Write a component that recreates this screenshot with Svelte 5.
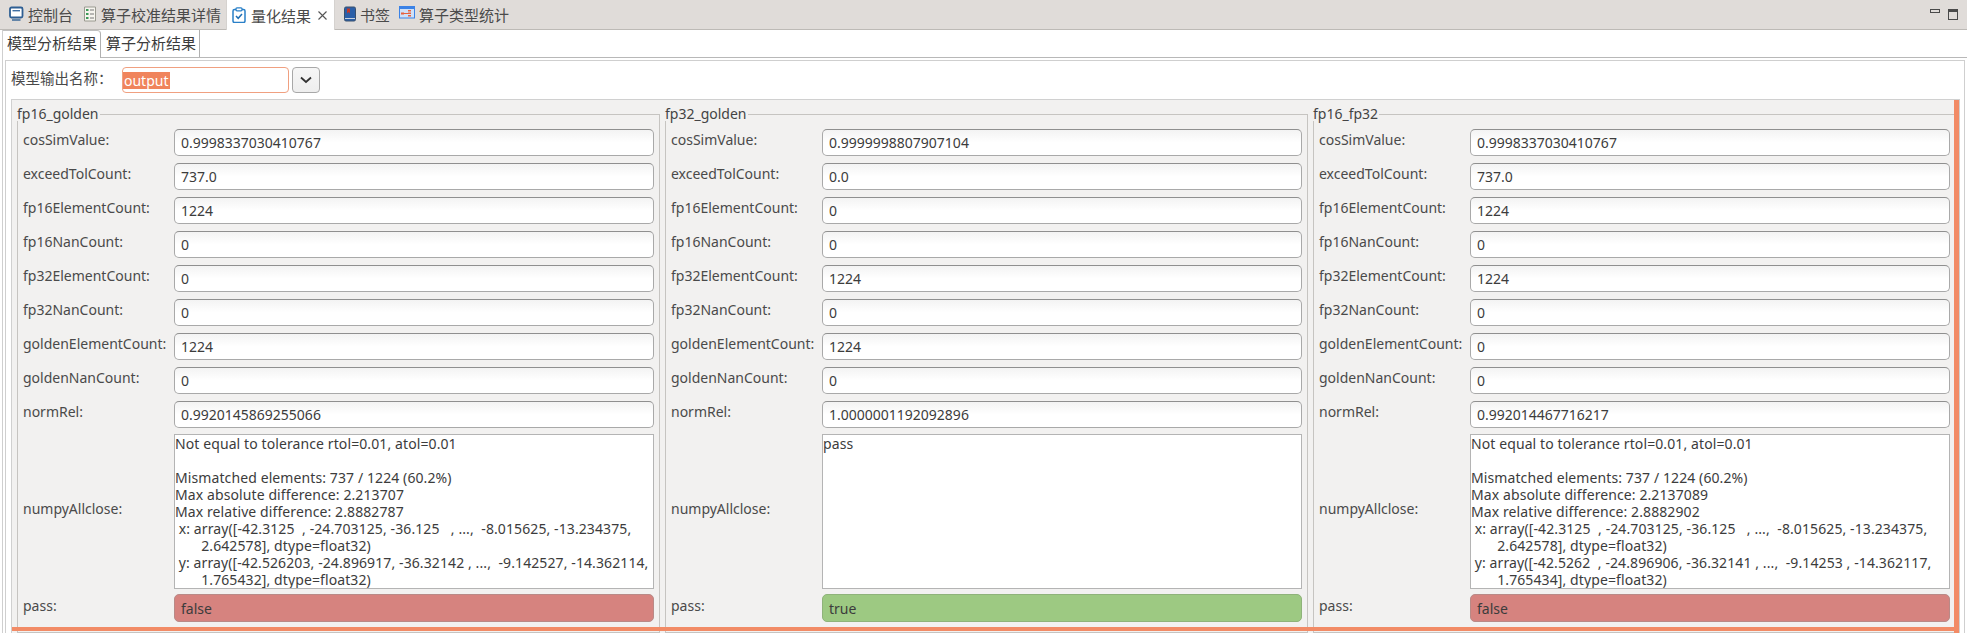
<script>
  const tabs = [
    { id: 'console', label: '控制台' },
    { id: 'list', label: '算子校准结果详情' },
    { id: 'clip', label: '量化结果', active: true },
    { id: 'book', label: '书签' },
    { id: 'panel', label: '算子类型统计' }
  ];
  const keys = ['cosSimValue','exceedTolCount','fp16ElementCount','fp16NanCount','fp32ElementCount','fp32NanCount','goldenElementCount','goldenNanCount','normRel'];
  const groups = [
    { title: 'fp16_golden', values: ['0.9998337030410767','737.0','1224','0','0','0','1224','0','0.9920145869255066'],
      text: `Not equal to tolerance rtol=0.01, atol=0.01

Mismatched elements: 737 / 1224 (60.2%)
Max absolute difference: 2.213707
Max relative difference: 2.8882787
 x: array([-42.3125  , -24.703125, -36.125   , ...,  -8.015625, -13.234375,
       2.642578], dtype=float32)
 y: array([-42.526203, -24.896917, -36.32142 , ...,  -9.142527, -14.362114,
       1.765432], dtype=float32)`, pass: false },
    { title: 'fp32_golden', values: ['0.9999998807907104','0.0','0','0','1224','0','1224','0','1.0000001192092896'],
      text: 'pass', pass: true },
    { title: 'fp16_fp32', values: ['0.9998337030410767','737.0','1224','0','1224','0','0','0','0.992014467716217'],
      text: `Not equal to tolerance rtol=0.01, atol=0.01

Mismatched elements: 737 / 1224 (60.2%)
Max absolute difference: 2.2137089
Max relative difference: 2.8882902
 x: array([-42.3125  , -24.703125, -36.125   , ...,  -8.015625, -13.234375,
       2.642578], dtype=float32)
 y: array([-42.5262  , -24.896906, -36.32141 , ...,  -9.14253 , -14.362117,
       1.765434], dtype=float32)`, pass: false }
  ];
</script>

<div class="app">
  <div class="tabbar">
    {#each tabs as t}
      <div class="tab t-{t.id}" class:active={t.active}>
        <svg class="ico" viewBox="0 0 16 16" width="16" height="16">
          {#if t.id === 'console'}
            <rect x="2" y="1.500" width="12.500" height="10" rx="1.500" fill="#fff" stroke="#2f5f93" stroke-width="1.800"/>
            <rect x="4.500" y="4" width="7.500" height="1.400" fill="#3f6fa3"/>
            <path d="M4 13.300h8.500v1.400H4z" fill="#2f5f93"/>
          {:else if t.id === 'list'}
            <path d="M2.500 1h11v14h-11z" fill="#f6f4ee" stroke="#9a9a90"/>
            <path d="M4 3h2.500v2H4zM4 7h2.500v2H4zM4 11h2.500v2H4z" fill="#3f9a5a"/>
            <path d="M8 4h4M8 8h4M8 12h4" stroke="#777" stroke-width="1"/>
          {:else if t.id === 'clip'}
            <rect x="2" y="2.500" width="12" height="13" rx="1.500" fill="#fff" stroke="#2a80c8" stroke-width="1.500"/>
            <rect x="5" y="0.800" width="6" height="3" rx="1" fill="#fff" stroke="#2a80c8" stroke-width="1.300"/>
            <path d="M5 9l2.200 2.300L11 7" fill="none" stroke="#1f6fb5" stroke-width="1.500"/>
          {:else if t.id === 'book'}
            <rect x="2.500" y="1" width="11" height="14" rx="1.500" fill="#2a5fa8" stroke="#39506e"/>
            <path d="M3 12.500h10" stroke="#c9d3df" stroke-width="1"/>
            <path d="M5 2.500h3v5L6.500 6 5 7.500z" fill="#c0392b"/>
          {:else}
            <rect x="0" y="0" width="16" height="12.500" fill="#3b82e6"/>
            <rect x="1" y="3" width="14" height="8.500" fill="#cfe0f7"/>
            <path d="M2 6.500h3v2H2z" fill="#e8613c"/>
            <path d="M9 4h3v1.500H9zM9 6.500h3V8H9zM9 9h3v1.500H9z" fill="#e8613c"/>
            <path d="M5 7.500h4" stroke="#e8613c"/>
          {/if}
        </svg>
        <span>{t.label}</span>
        {#if t.active}
          <svg class="close" viewBox="0 0 9 9" width="9" height="9"><path d="M.5.500l8 8M8.500.500l-8 8" stroke="#555" stroke-width="1.100"/></svg>
        {/if}
      </div>
    {/each}
    <div class="winbtns">
      <span class="min"></span>
      <span class="max"></span>
    </div>
  </div>

  <div class="content">
    <div class="subtabs">
      <div class="subtab on">模型分析结果</div>
      <div class="subtab">算子分析结果</div>
    </div>

    <div class="panel">
      <div class="combo">
        <span class="clabel">模型输出名称：</span>
        <div class="cinput"><span class="sel">output</span></div>
        <div class="cbtn">
          <svg viewBox="0 0 12 8" width="12" height="8"><path d="M1 1.500l5 4.500 5-4.500" fill="none" stroke="#333" stroke-width="1.800"/></svg>
        </div>
      </div>

      <div class="composite">
        <div class="groups">
          {#each groups as g}
            <div class="group">
              <div class="gtitle"><span>{g.title}</span></div>
              <div class="gbody">
                {#each keys as k, i}
                  <div class="label">{k}:</div>
                  <div class="field">{g.values[i]}</div>
                {/each}
                <div class="label mid">numpyAllclose:</div>
                <div class="area">{g.text}</div>
                <div class="label plabel">pass:</div>
                <div class="field passf" class:ok={g.pass}>{g.pass ? 'true' : 'false'}</div>
              </div>
            </div>
          {/each}
        </div>
        <div class="hl-right"></div>
        <div class="hl-bottom"></div>
      </div>
    </div>
  </div>
</div>

<style>
  :global(body) { margin: 0; background: #fff; }
  .app {
    width: 1967px; height: 633px; overflow: hidden; background: #fff;
    display: flex; flex-direction: column;
    font-family: "Noto Sans", "Noto Sans CJK SC", sans-serif;
    font-size: 14px; color: #3c3c3c;
  }
  .tabbar {
    height: 29px; flex: none; background: #e0dcd9; border-bottom: 1px solid #bdbab6;
    display: flex; align-items: stretch; padding-left: 3px; font-size: 15px; color: #4a4a4a;
  }
  .tab { display: flex; align-items: center; white-space: nowrap; }
  .t-console { margin-left: 5px; gap: 4px; }
  .t-list { margin-left: 9px; gap: 3px; }
  .t-clip {
    margin-left: 5px; gap: 4px; padding-left: 4px; width: 109px; height: 30px; box-sizing: border-box;
    background: #fff; border-left: 1px solid #d5d2cf; border-right: 1px solid #d5d2cf;
  }
  .t-book { margin-left: 7px; gap: 2px; }
  .t-panel { margin-left: 9px; gap: 4px; }
  .ico { flex: none; margin-bottom: 1px; }
  .close { margin-left: 3px; flex: none; }
  .winbtns { margin-left: auto; display: flex; gap: 8px; align-items: flex-start; padding: 9px 8px 0 0; }
  .min { width: 8px; height: 2px; border: 1px solid #4a4a4a; }
  .max { width: 8px; height: 7px; border: 1px solid #4a4a4a; border-top-width: 3px; margin-right: 1px; }
  .content { flex: 1; min-height: 0; margin-left: 2px; border-left: 1px solid #cfcfcf; display: flex; flex-direction: column; }
  .subtabs {
    height: 27px; flex: none; border-bottom: 1px solid #b8b8b8; display: flex; font-size: 15px; background: #fff;
  }
  .subtab { padding: 0 2px 0 5px; line-height: 26px; width: 91px; border-right: 1px solid #b0b0b0; white-space: nowrap; }
  .subtab.on {
    border-top: 1px solid #c0c0c0; border-top-right-radius: 4px; height: 27px; background: #fff;
    padding: 0 2px 0 4px; line-height: 25px; position: relative;
  }
  .panel {
    flex: 1; margin: 2px 2px 0 2px; border: 1px solid #cfcfcf; border-bottom: 0;
    display: flex; flex-direction: column; padding: 6px 4px 0 5px; min-height: 0;
  }
  .combo { height: 26px; flex: none; display: flex; align-items: flex-start; }
  .clabel { width: 111px; font-size: 14.500px; line-height: 22px; color: #4a4a4a; white-space: nowrap; }
  .cinput {
    width: 165px; height: 24px; border: 1px solid #f0a080; border-radius: 4px; background: #fff;
    display: flex; align-items: center; overflow: hidden;
  }
  .sel { background: #f0845c; color: #fff; height: 17px; line-height: 17px; padding: 0 1px; width: 45px; font-size: 14px; }
  .cbtn {
    width: 26px; height: 24px; margin-left: 3px; border: 1px solid #a8a8a8; border-radius: 4px;
    background: linear-gradient(#f6f6f6, #eeeeee); display: flex; align-items: center; justify-content: center;
  }
  .composite {
    margin-top: 6px; flex: 1; min-height: 0; position: relative; background: #f2f1f0;
    border: 1px solid #d0d0d0; border-bottom: 0; padding: 6px 0 0 5px; overflow: hidden;
  }
  .groups { display: grid; grid-template-columns: repeat(3, 643px); column-gap: 5px; }
  .gtitle { height: 15px; display: flex; align-items: flex-start; line-height: 15px; }
  .gtitle span { padding-right: 1px; color: #444; }
  .gtitle::after {
    content: ""; flex: 1; height: 7px; margin-top: 8px;
    border-top: 1px solid #c6c4c1; border-right: 1px solid #c6c4c1;
  }
  .gbody {
    border-left: 1px solid #c6c4c1; border-right: 1px solid #c6c4c1; border-bottom: 1px solid #c6c4c1;
    padding: 8px 5px 10px 5px; display: grid; grid-template-columns: 151px 480px; row-gap: 7px;
  }
  .label { line-height: 20px; padding-top: 1px; color: #4a4a4a; white-space: nowrap; }
  .label.mid { align-self: center; padding: 0 0 5px; }
  .label.plabel { padding-top: 2px; }
  .field {
    height: 25px; line-height: 25px; padding: 0 6px; border: 1px solid #a9a9a9; border-top-color: #8f8f8f; border-radius: 5px;
    background: linear-gradient(#f3f3f3, #fff 50%); color: #3c3c3c; white-space: nowrap;
  }
  .area {
    height: 153px; border: 1px solid #b4b4b4; background: #fff; margin-top: -1px; margin-bottom: -2px;
    line-height: 17px; white-space: pre; overflow: hidden; color: #3c3c3c; letter-spacing: 0.100px;
  }
  .passf { height: 26px; line-height: 27px; background: #d6837f; border-color: #b98a87; }
  .passf.ok { background: #9dc982; border-color: #8fb37a; }
  .hl-right { position: absolute; top: 0; right: 0; bottom: 0; width: 5px; background: #f28b66; }
  .hl-bottom { position: absolute; left: 0; right: 0; top: 527px; height: 4px; background: #f28b66; }
</style>
